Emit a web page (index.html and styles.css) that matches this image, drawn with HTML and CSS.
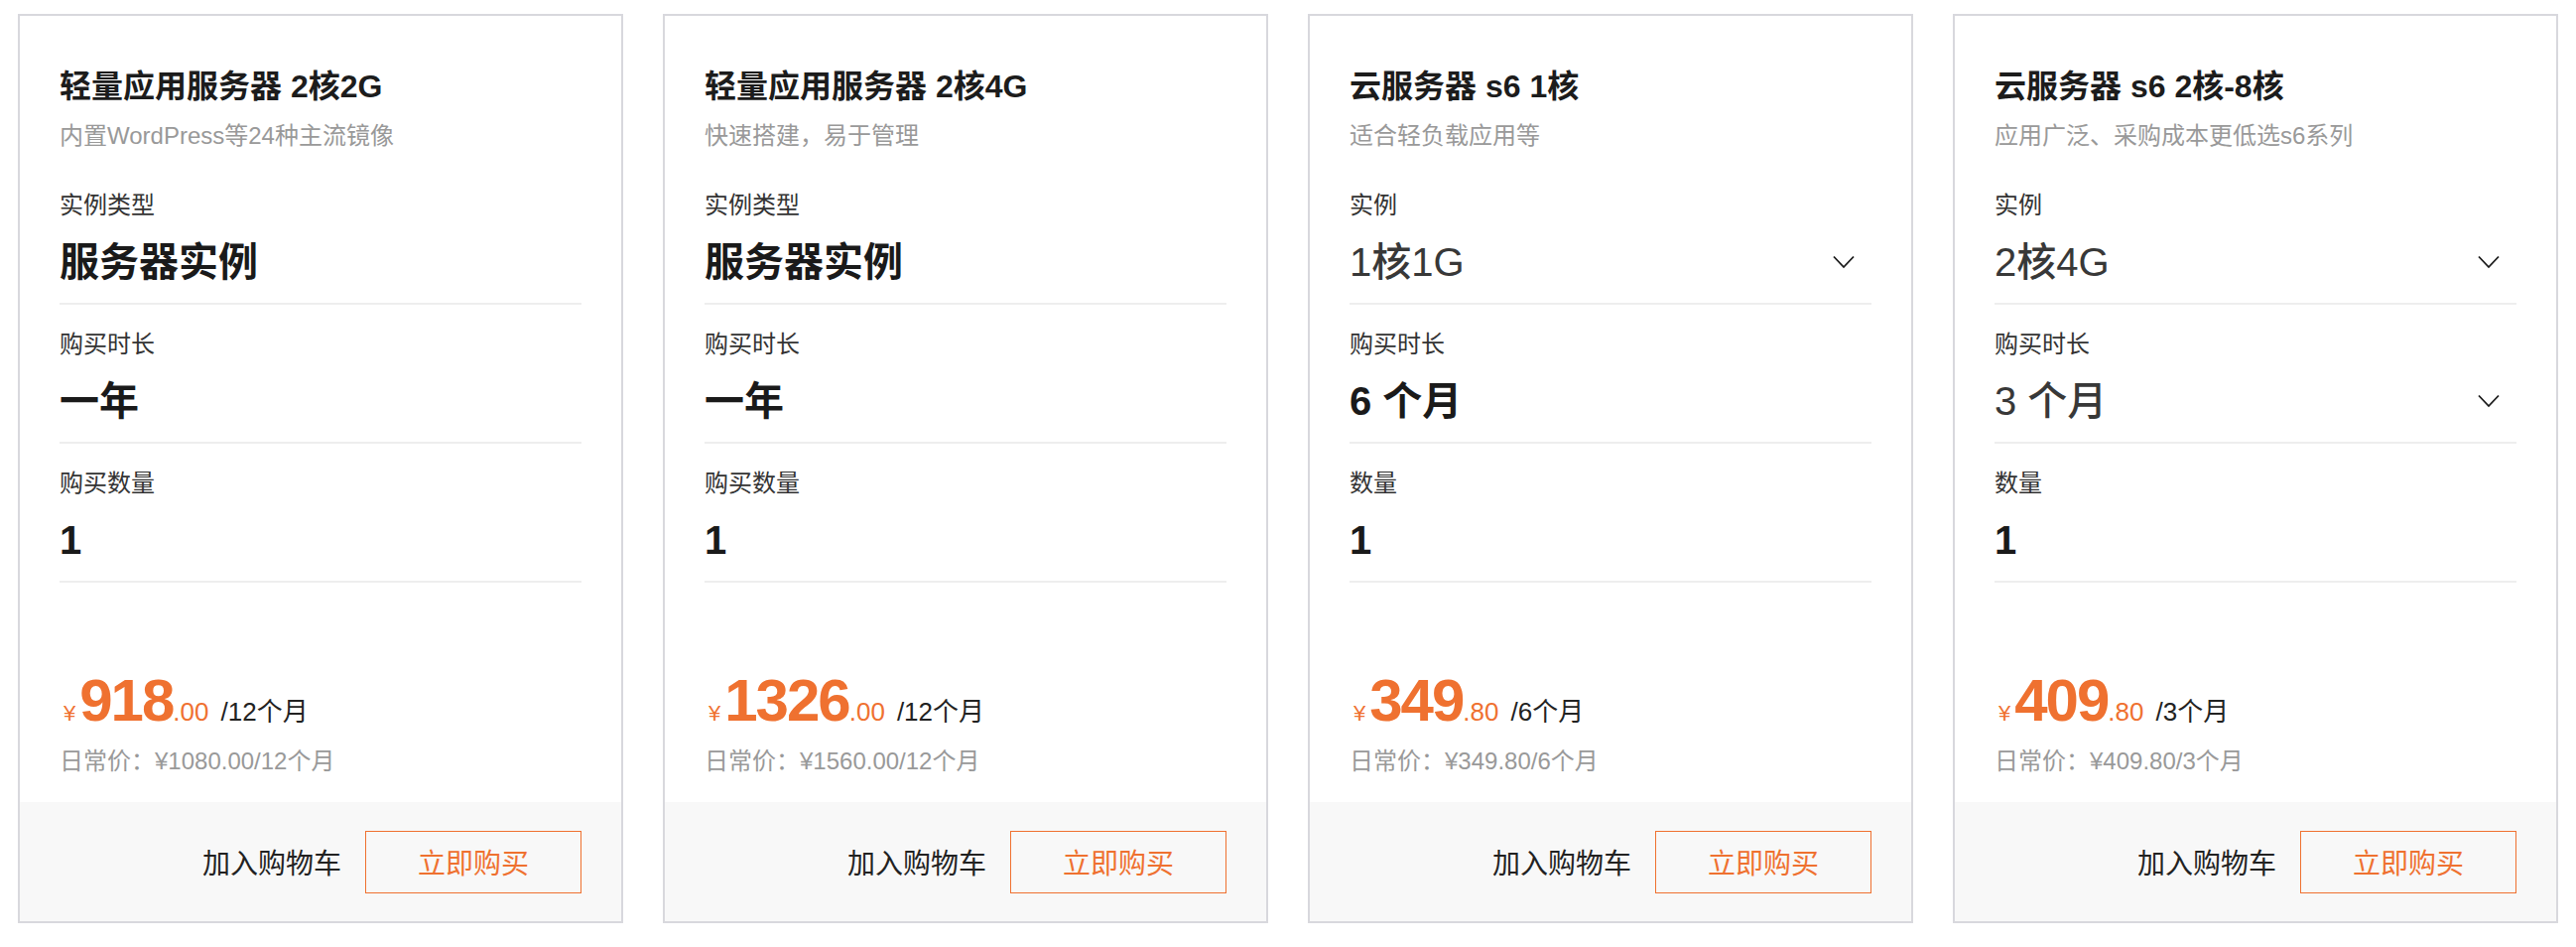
FILE: index.html
```html
<!DOCTYPE html>
<html lang="zh-CN">
<head>
    <meta charset="UTF-8">
    <title>云产品特惠</title>
    <link rel="stylesheet" href="styles.css">
</head>
<body>
    <div class="cards">
        <div class="card">
            <div class="card-body">
                <div class="card-head">
                    <h3 class="card-title">轻量应用服务器 2核2G</h3>
                    <p class="card-desc">内置WordPress等24种主流镜像</p>
                </div>
                <div class="spec">
                    <div class="spec-label">实例类型</div>
                    <div class="spec-value">服务器实例</div>
                </div>
                <div class="spec">
                    <div class="spec-label">购买时长</div>
                    <div class="spec-value">一年</div>
                </div>
                <div class="spec">
                    <div class="spec-label">购买数量</div>
                    <div class="spec-value">1</div>
                </div>
                <div class="price-box">
                    <div class="price"><span class="yen">¥</span><span class="amount">918</span><span class="cents">.00</span><span class="unit">/12个月</span></div>
                    <div class="reg-price">日常价：¥1080.00/12个月</div>
                </div>
            </div>
            <div class="card-foot">
                <a class="btn-cart" href="#">加入购物车</a>
                <a class="btn-buy" href="#">立即购买</a>
            </div>
        </div>

        <div class="card">
            <div class="card-body">
                <div class="card-head">
                    <h3 class="card-title">轻量应用服务器 2核4G</h3>
                    <p class="card-desc">快速搭建，易于管理</p>
                </div>
                <div class="spec">
                    <div class="spec-label">实例类型</div>
                    <div class="spec-value">服务器实例</div>
                </div>
                <div class="spec">
                    <div class="spec-label">购买时长</div>
                    <div class="spec-value">一年</div>
                </div>
                <div class="spec">
                    <div class="spec-label">购买数量</div>
                    <div class="spec-value">1</div>
                </div>
                <div class="price-box">
                    <div class="price"><span class="yen">¥</span><span class="amount">1326</span><span class="cents">.00</span><span class="unit">/12个月</span></div>
                    <div class="reg-price">日常价：¥1560.00/12个月</div>
                </div>
            </div>
            <div class="card-foot">
                <a class="btn-cart" href="#">加入购物车</a>
                <a class="btn-buy" href="#">立即购买</a>
            </div>
        </div>

        <div class="card">
            <div class="card-body">
                <div class="card-head">
                    <h3 class="card-title">云服务器 s6 1核</h3>
                    <p class="card-desc">适合轻负载应用等</p>
                </div>
                <div class="spec">
                    <div class="spec-label">实例</div>
                    <div class="spec-value select">1核1G
                        <svg class="arrow" width="22" height="14" viewBox="0 0 22 14"><polyline points="1,1.5 11,12 21,1.5" fill="none" stroke="#1a1a1a" stroke-width="1.8"/></svg>
                    </div>
                </div>
                <div class="spec">
                    <div class="spec-label">购买时长</div>
                    <div class="spec-value">6 个月</div>
                </div>
                <div class="spec">
                    <div class="spec-label">数量</div>
                    <div class="spec-value">1</div>
                </div>
                <div class="price-box">
                    <div class="price"><span class="yen">¥</span><span class="amount">349</span><span class="cents">.80</span><span class="unit">/6个月</span></div>
                    <div class="reg-price">日常价：¥349.80/6个月</div>
                </div>
            </div>
            <div class="card-foot">
                <a class="btn-cart" href="#">加入购物车</a>
                <a class="btn-buy" href="#">立即购买</a>
            </div>
        </div>

        <div class="card">
            <div class="card-body">
                <div class="card-head">
                    <h3 class="card-title">云服务器 s6 2核-8核</h3>
                    <p class="card-desc">应用广泛、采购成本更低选s6系列</p>
                </div>
                <div class="spec">
                    <div class="spec-label">实例</div>
                    <div class="spec-value select">2核4G
                        <svg class="arrow" width="22" height="14" viewBox="0 0 22 14"><polyline points="1,1.5 11,12 21,1.5" fill="none" stroke="#1a1a1a" stroke-width="1.8"/></svg>
                    </div>
                </div>
                <div class="spec">
                    <div class="spec-label">购买时长</div>
                    <div class="spec-value select">3 个月
                        <svg class="arrow" width="22" height="14" viewBox="0 0 22 14"><polyline points="1,1.5 11,12 21,1.5" fill="none" stroke="#1a1a1a" stroke-width="1.8"/></svg>
                    </div>
                </div>
                <div class="spec">
                    <div class="spec-label">数量</div>
                    <div class="spec-value">1</div>
                </div>
                <div class="price-box">
                    <div class="price"><span class="yen">¥</span><span class="amount">409</span><span class="cents">.80</span><span class="unit">/3个月</span></div>
                    <div class="reg-price">日常价：¥409.80/3个月</div>
                </div>
            </div>
            <div class="card-foot">
                <a class="btn-cart" href="#">加入购物车</a>
                <a class="btn-buy" href="#">立即购买</a>
            </div>
        </div>
    </div>
</body>
</html>
```

FILE: styles.css
```css
body {
    font-family: "Liberation Sans", "Noto Sans CJK SC", sans-serif;
    background-color: #ffffff;
    color: #333;
    margin: 0;
    padding: 0;
}

.cards {
    display: flex;
    gap: 40px;
    padding: 14px 18px;
}

.card {
    flex: 1;
    display: flex;
    flex-direction: column;
    border: 2px solid #d8d8dd;
    background-color: #ffffff;
}

.card-body {
    padding: 49px 40px 0;
}

.card-head {
    padding-bottom: 13px;
}

.card-title {
    margin: 0;
    font-size: 32px;
    line-height: 44px;
    font-weight: 700;
    color: #1c1c1c;
}

.card-desc {
    margin: 11px 0 0;
    font-size: 24px;
    line-height: 34px;
    color: #999;
}

.spec {
    padding: 23px 0 13px;
    border-bottom: 2px solid #eeeeee;
}

.spec-label {
    font-size: 24px;
    line-height: 34px;
    color: #333;
}

.spec-value {
    display: flex;
    justify-content: space-between;
    align-items: center;
    margin-top: 12px;
    font-size: 40px;
    line-height: 56px;
    font-weight: 700;
    color: #1a1a1a;
}

.spec-value.select {
    font-weight: 500;
    color: #383838;
}

.arrow {
    margin-right: 17px;
}

.price-box {
    padding: 89px 0 24px;
}

.price {
    display: flex;
    align-items: baseline;
    color: #ef7130;
    white-space: nowrap;
}

.price span {
    line-height: 1;
}

.yen {
    font-size: 22px;
    padding-left: 4px;
    margin-right: 4px;
}

.amount {
    font-size: 60px;
    font-weight: 700;
    letter-spacing: -2px;
}

.cents {
    font-size: 26px;
}

.unit {
    margin-left: 12px;
    font-size: 26px;
    color: #222;
}

.reg-price {
    margin-top: 14px;
    font-size: 24px;
    line-height: 34px;
    color: #999;
}

.card-foot {
    margin-top: auto;
    height: 120px;
    padding: 0 40px;
    display: flex;
    justify-content: flex-end;
    align-items: center;
    gap: 24px;
    background-color: #f8f8f8;
}

.btn-cart {
    font-size: 28px;
    color: #222;
    text-decoration: none;
}

.btn-buy {
    box-sizing: border-box;
    width: 218px;
    height: 63px;
    display: flex;
    justify-content: center;
    align-items: center;
    border: 1px solid #ef7130;
    font-size: 28px;
    color: #ef7130;
    text-decoration: none;
}
```
